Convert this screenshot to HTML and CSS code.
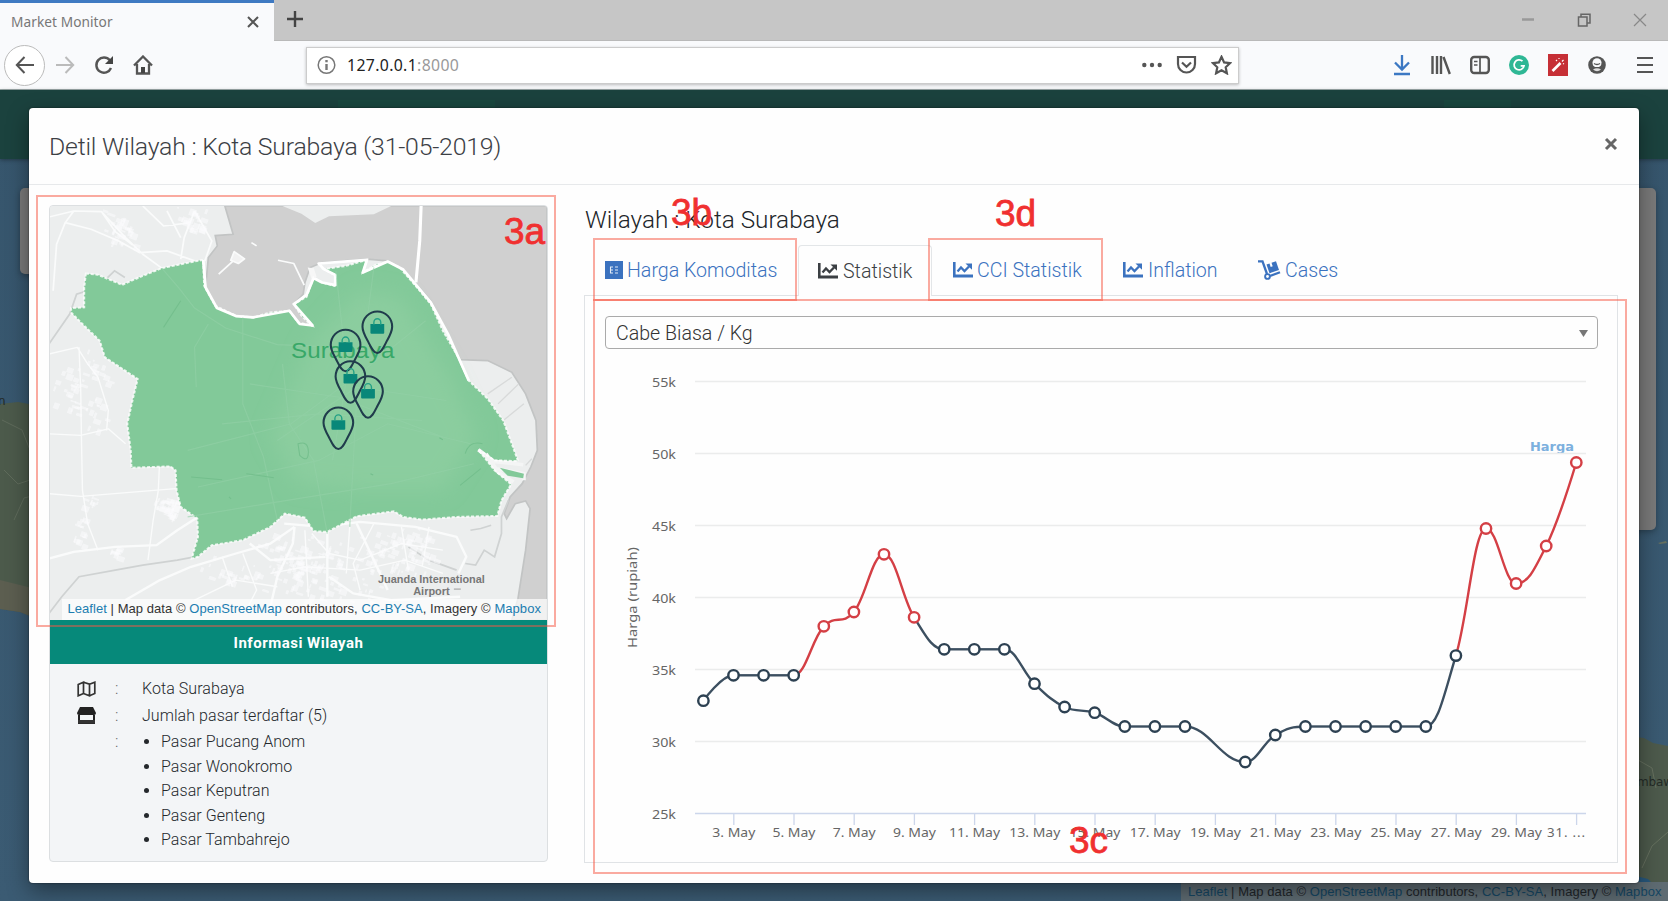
FILE: index.html
```html
<!DOCTYPE html>
<html lang="id">
<head>
<meta charset="utf-8">
<title>Market Monitor</title>
<link rel="stylesheet" href="styles.css">
</head>
<body>
<header class="browser">
  <div class="tabstrip">
    <div class="tab"><span class="tab-title">Market Monitor</span>
      <svg class="tab-close" width="14" height="14" viewBox="0 0 14 14"><path d="M2 2l10 10M12 2L2 12"/></svg>
    </div>
    <svg class="tab-new" width="18" height="18" viewBox="0 0 18 18"><path d="M9 1v16M1 9h16"/></svg>
    <div class="winctl">
      <svg width="14" height="14" viewBox="0 0 14 14"><path d="M1 6.500h12" stroke-width="2.500" stroke="#999"/></svg>
      <svg width="14" height="14" viewBox="0 0 14 14"><path d="M1.500 4h8.500v9H1.500zM4 4V1.200h9V10h-3"/></svg>
      <svg width="14" height="14" viewBox="0 0 14 14"><path d="M1 1l12 12M13 1L1 13" stroke="#888" stroke-width="1.200"/></svg>
    </div>
  </div>
  <div class="toolbar">
    <div class="back"><svg width="20" height="18" viewBox="0 0 20 18"><path d="M19 9H2M9.500 1L1.800 9l7.700 8"/></svg></div>
    <svg class="fwd" width="20" height="18" viewBox="0 0 20 18"><path d="M1 9h17M10.500 1l7.700 8-7.700 8"/></svg>
    <svg class="reload" width="20" height="20" viewBox="0 0 20 20"><path d="M15.800 5.200A7.600 7.600 0 1 0 17 13" stroke-width="2.400"/><path d="M19 1v8h-8z" fill="#444" stroke="none"/></svg>
    <svg class="home" width="20" height="20" viewBox="0 0 20 20"><path d="M1 10.500L10 1.500l9 9M4 9v9.500h12V9" stroke-width="2.300"/><path d="M8 18v-6h4v6z" fill="#444" stroke="none"/></svg>
    <div class="urlbar">
      <svg width="19" height="20" viewBox="0 0 19 20"><circle cx="9.500" cy="10" r="8.300" stroke="#777" stroke-width="1.500"/><path d="M9.500 9v6M9.500 5v2.200" stroke="#777" stroke-width="2.400"/></svg>
      <span class="url">127.0.0.1<i>:8000</i></span>
      <div class="urlicons">
        <svg width="20" height="20" viewBox="0 0 20 20"><g fill="#555" stroke="none"><circle cx="2.300" cy="10" r="2.200"/><circle cx="10" cy="10" r="2.200"/><circle cx="17.700" cy="10" r="2.200"/></g></svg>
        <svg width="21" height="20" viewBox="0 0 21 20"><path d="M2 2h17v7a8.500 8.500 0 0 1-17 0zM6 7.500l4.500 4.300L15 7.500" stroke-width="2.200"/></svg>
        <svg width="21" height="20" viewBox="0 0 21 20"><path d="M10.500 1.800l2.600 5.600 6 .7-4.400 4.200 1.200 6-5.400-3-5.400 3 1.200-6L1.900 8.100l6-.7z" stroke-width="2.200"/></svg>
      </div>
    </div>
    <div class="tools">
      <svg width="20" height="22" viewBox="0 0 20 22"><path d="M10 1v14M3 8.500l7 7 7-7M2 20h16" stroke="#3c78c3" stroke-width="2.300"/></svg>
      <svg width="20" height="22" viewBox="0 0 20 22"><path d="M1.500 2v18M6 2v18M10 2v18M12.500 3l6.300 17" stroke-width="2.400"/></svg>
      <svg width="20" height="22" viewBox="0 0 20 22"><rect x="1.200" y="3" width="17.600" height="16" rx="3" stroke-width="2.400"/><path d="M10 3v16M4 7.500h3.500M4 11h3.500" stroke-width="1.700"/></svg>
      <svg width="20" height="22" viewBox="0 0 20 22"><circle cx="10" cy="11" r="10" fill="#2fb795" stroke="none"/><path d="M13.500 7.200A5 5 0 1 0 15 11.800h-3.300" stroke="#fff" stroke-width="1.800"/></svg>
      <svg width="20" height="22" viewBox="0 0 20 22"><path d="M0 0h20v22H0z" fill="#c62f36" stroke="none"/><path d="M4.500 17l8-8" stroke="#fff" stroke-width="2.600"/><path d="M14 7.500l1.500-1.500M8 6l1 1M11 4v1M16 10l-1-.6" stroke="#fff" stroke-width="1.200"/></svg>
      <svg width="20" height="22" viewBox="0 0 20 22"><circle cx="10" cy="11" r="8.800" fill="#555" stroke="none"/><path d="M5.500 8.500a4.500 4.300 0 0 1 9 0q0 3.500-2.500 4.500h-4q-2.500-1-2.500-4.500z" fill="#f9fafc" stroke="none"/><path d="M6 15.500q4-2.500 8 0-4 3.500-8 0z" fill="#ddd" stroke="none"/><path d="M7 9.500q3 2 6 0" stroke-width="1.500"/></svg>
    </div>
    <svg class="menu" width="16" height="18" viewBox="0 0 16 18"><path d="M0 2h16M0 9h16M0 16h16" stroke-width="2"/></svg>
  </div>
</header>

<main class="page">
  <div class="navband"><span></span><span></span></div>
  <svg class="basemap" width="1668" height="811" viewBox="0 90 1668 811">
    <path d="M0 404L18 402 40 406V620L20 612 0 609z" fill="#4c5a4b"/>
    <path d="M0 580l40 10v30l-20-8-20-3z" fill="#5c5e50"/>
    <path d="M4 470l14 14 12-4M2 420l20 10 8 20M14 520l10-22 8-2" stroke="#5f6b5b" fill="none"/>
    <path d="M1636 737l8 1 9 5 15 3v146h-22l-10-10z" fill="#4d5a4c"/>
    <path d="M1638 760l14 8 4 20M1642 868l10-22 16-14" stroke="#66705f" fill="none"/>
    <path d="M1636 876l12 3 8 8h-20z" fill="#27567a"/>
    <path d="M1658 543l8-2 1 2-7 1z" fill="#66705f"/>
    <text x="-2" y="405" class="place">n</text><text x="1637" y="786" class="place" textLength="36">mbaw</text>
  </svg>
  <div class="ghost ghost-left"></div>
  <div class="ghost ghost-right"></div>
  <div class="attrib page-attrib"><a>Leaflet</a> | Map data © <a>OpenStreetMap</a> contributors, <a>CC-BY-SA</a>, Imagery © <a>Mapbox</a></div>

  <section class="modal">
    <div class="modal-head">
      <h1>Detil Wilayah : Kota Surabaya (31-05-2019)</h1>
      <svg width="14" height="14" viewBox="0 0 14 14"><path d="M2 2l10 10M12 2L2 12"/></svg>
    </div>
    <div class="modal-body">
      <div class="region">
        <div class="map">
          <svg width="498" height="414" viewBox="58 45 1444 1245" preserveAspectRatio="none">
            <defs>
              <filter id="soft"><feGaussianBlur stdDeviation="30"/></filter>
              <g id="pin">
                <path d="M0 79C-12 79-20 58-28 42-38 24-43 12-43 0a43 46 0 0 1 86 0C43 12 38 24 28 42 20 58 12 79 0 79z" fill="none" stroke="#203c4c" stroke-width="6"/>
                <path d="M-20-8H20V18q0 3-3 3h-34q-3 0-3-3z" fill="#088779"/>
                <path d="M-10-6v-7a10 11 0 0 1 20 0v7" fill="none" stroke="#22a085" stroke-width="4"/>
              </g>
            </defs>
            <path d="M58 45H1502V1290H58z" fill="#eceeee"/>
            <path d="M568 45L592 130 540 134 546 165 520 200 512 290 545 355 600 378 660 380 755 362 785 400 825 404 768 340 795 310 800 275 815 230 850 215 980 205 1040 210 1085 235 1165 330 1215 430 1250 507 1330 510 1400 545 1440 610 1470 690 1474 780 1455 830 1430 880 1395 920 1378 970 1385 985 1410 940 1440 932 1453 955 1440 1080 1418 1225 1400 1290H1502V45z" fill="#d0d0d0" stroke="#c2c4c4" stroke-width="5"/>
            <path d="M735 45L790 68 830 96 870 76 1000 70 1050 45z" fill="#eceeee"/>
            <g fill="none" stroke="#fafbfb" stroke-width="5" stroke-linejoin="round">
              <path d="M1137 45L1133 150 1122 275" stroke="#fff" stroke-width="9"/>
              <path d="M550 250l55-52M722 208l46 10 30 65M645 155l15 10"/>
              <path d="M595 182l30 22-18 14-22-10z" fill="#f2f2f2"/>
              <path d="M58 78L130 60 210 62 280 140 330 190 385 232M130 60L105 95 80 160 70 300M105 95L180 115 260 150 320 185 400 180 480 210M440 205L450 140 480 60M210 62l40 60 50 40M480 60l50 90-20 60M330 45l60 60 80-10M400 60l40 80"/>
              <path d="M58 490L140 470 170 520 200 560 230 660 225 720M58 730L150 735 230 715 280 760M145 470L150 600 152 740 155 900 170 1000 200 1080M58 910L150 918 425 895M378 830L375 900 360 990 345 1110" stroke-width="4"/>
              <path d="M58 1105L130 1085 250 1070 370 1065 430 1020 490 980M280 1230L380 1170 470 1130 600 1090 700 1060 770 1010M865 1025V1220M770 1010L765 1060 720 1160 700 1250M740 1000L850 1010 960 995 1120 1010 1240 1040 1268 1100 1245 1150M870 1160L940 1210 1050 1230 1250 1220M640 1060L700 1110 860 1100M950 1000L1000 1110 1040 1200" stroke-width="7"/>
              <path d="M820 1030l50 60 90 20 120-50 120 20M700 1150l100-20 160 10 130-30 110 40M930 1010l-10 140M1080 1010l20 130M620 1090l40 110-30 60M560 1100l30 90M800 1020l10 200M480 1230l120-60 120 20M1000 1000l-60 120 20 80M1160 1010l-20 120" stroke-width="4"/>
            </g>
            <path d="M58 1270L95 1220 145 1160 250 1140 330 1125 430 1110 480 1100M1265 1120l30 5 25-45 30 20 20-70 0-50 20-50M1280 1020l30-5 30-10M58 460l60-90 20-60 60-20 50-50 30 20M1100 1070l60 40 80 30" fill="none" stroke="#cfd2d2" stroke-width="5"/>
            <path d="M1440 825l18-20M1330 610l70-50M1360 640l60-60M1375 690l60-50" fill="none" stroke="#d8dada" stroke-width="4"/>
            <g id="blocks" fill="#fbfcfd"></g>
            <path id="city" d="M165 248L200 252 270 282 330 255 385 232 450 218 505 207 508 285 540 345 600 375 650 380 700 365 755 360 780 395 820 405 790 375 768 340 805 318 825 260 850 275 885 285 890 255 855 235 920 225 980 207 968 245 1005 222 1040 212 1075 230 1125 290 1165 340 1200 420 1245 500 1275 570 1330 625 1375 690 1400 760 1418 812 1350 810 1303 778 1350 840 1398 882 1370 930 1358 977 1240 980 1140 988 1085 980 1058 963 950 978 865 1025 825 1023 800 982 742 970 700 1010 620 1050 530 1065 490 1100 472 1105 490 1040 488 985 440 950 428 900 425 840 410 828 297 832 295 780 285 700 300 630 315 565 220 500 205 450 160 405 122 365 122 352 160 350 160 290z" fill="#82c999"/>
            <path d="M820 450L960 300 1080 320 1220 560 1300 740 1200 900 950 900 780 880 700 740z" fill="#8bcd9f" filter="url(#soft)"/>
            <path d="M505 207L512 290 545 352 600 376 650 380 755 360 785 400 822 404 768 340 805 312 825 262 850 275 888 283 888 252 855 235 840 218 980 207 968 245 1040 212 1085 236 1165 335 1215 430 1275 570" fill="none" stroke="#fff" stroke-width="8" stroke-linejoin="round"/>
            <path d="M808 230l18 2 8 26-14 8z" fill="#f7f7f7"/>
            <path d="M1303 778l45 35 85 10M1325 790l35 55 45 30M1355 835l80 15v20" fill="none" stroke="#f4f5f5" stroke-width="11"/>
            <path d="M1365 832l70 18-2 14-45-8z" fill="#82c999"/>
            <use href="#city" class="outline"/>
            <path d="M385 232l50 60 45 60 90 60 150 50 120 5M520 400l-40 70 5 120M620 380v260l60 160 40 190M735 520l20 180 70 110 40 220M890 240l20 190 40 200-20 380M1000 230l-20 160-60 180-40 240M1150 390l-180 150-210 160-300 80M1210 630l-260-40-230 160M1280 760l-240-60-200 110-350 80M460 980l230-40 360-60 240-60M640 580l260 40 300 120M560 700l280-30 300 20" fill="none" stroke="#93d1a6" stroke-width="3.500" opacity=".6"/>
            <path d="M780 760q30-10 30 25t-25 10zM1265 790q10-40 50-30M470 860l90 8M630 850l80 12M1250 885l60-50M440 330l-50 80M580 920l6 6M990 850l8 4M1190 742l10 6" fill="none" stroke="#74bf8d" stroke-width="3"/>
            <g fill="#38a868" font-family="Liberation Sans, Arial, sans-serif" font-size="66"><text x="760" y="502" textLength="300" lengthAdjust="spacingAndGlyphs">Surabaya</text></g>
            <g fill="#777" font-family="Liberation Sans, Arial, sans-serif" font-weight="700" font-size="32"><text x="1012" y="1178" textLength="310" lengthAdjust="spacingAndGlyphs">Juanda International</text><text x="1114" y="1215" textLength="106" lengthAdjust="spacingAndGlyphs">Airport</text></g>
            <path d="M1232 1197h20" stroke="#999" stroke-width="3"/>
            <use href="#pin" x="1010" y="408"/><use href="#pin" x="918" y="463"/><use href="#pin" x="932" y="558"/><use href="#pin" x="983" y="603"/><use href="#pin" x="897" y="697"/>
          </svg>
          <div class="attrib map-attrib"><a>Leaflet</a> | Map data © <a>OpenStreetMap</a> contributors, <a>CC-BY-SA</a>, Imagery © <a>Mapbox</a></div>
        </div>
        <h2 class="info-title">Informasi Wilayah</h2>
        <div class="info">
          <div class="row"><svg width="19" height="16" viewBox="0 0 19 16"><path d="M1.200 3.500L6.500 1.200v11.300L1.200 14.800zM6.500 1.200l6 2v11.600l-6-2.300M12.500 3.200l5.300-2v11.300l-5.300 2.300" fill="none" stroke="#333" stroke-width="1.700"/></svg><b>:</b><span>Kota Surabaya</span></div>
          <div class="row"><svg width="19" height="17" viewBox="0 0 19 17"><path d="M3 0h13l3 6q0 2-2 2H2Q0 8 0 6z" fill="#222"/><path d="M2 8v8h15V8" fill="none" stroke="#222" stroke-width="2"/><path d="M1 13h17v3.500H1z" fill="#333"/></svg><b>:</b><span>Jumlah pasar terdaftar (5)</span></div>
          <div class="row list"><i></i><b>:</b><ul><li>Pasar Pucang Anom</li><li>Pasar Wonokromo</li><li>Pasar Keputran</li><li>Pasar Genteng</li><li>Pasar Tambahrejo</li></ul></div>
        </div>
      </div>
      <div class="detail">
        <h2>Wilayah : Kota Surabaya</h2>
        <nav class="tabs">
          <a class="t1"><svg width="18" height="18" viewBox="0 0 18 18"><path d="M0 0h18v18H0z"/><path d="M5.500 6H8M5.500 9H8M5.500 12H8M5.500 5.500v7M10 6h3M10 9h3M10 12h3" stroke="#fff" stroke-width="1.100" opacity=".85"/></svg><span>Harga Komoditas</span></a>
          <a class="t2"><svg width="20" height="16" viewBox="0 0 20 16"><use href="#trend"/></svg><span>Statistik</span></a>
          <a class="t3"><svg width="20" height="16" viewBox="0 0 20 16"><g id="trend"><path d="M0 0h2.600v12.600H20V15.500H0z"/><path d="M4.500 9.500l3.500-4 3.500 3.500 4.500-4.500" fill="none" stroke="currentColor" stroke-width="2.300"/><path d="M12.500 1.500H19v6.300z"/></g></svg><span>CCI Statistik</span></a>
          <a class="t4"><svg width="20" height="16" viewBox="0 0 20 16"><use href="#trend"/></svg><span>Inflation</span></a>
          <a class="t5"><svg width="23" height="20" viewBox="0 0 23 20"><path d="M0 1.300h4.500L9 14" fill="none" stroke="currentColor" stroke-width="2.300"/><circle cx="9.500" cy="16.500" r="2.400" fill="none" stroke="currentColor" stroke-width="1.900"/><path d="M12 16l10-3.800" stroke="currentColor" stroke-width="2.300"/><path d="M8.500 4.500l3-1 1.200 3.500 2-.7L13.500 2.800l4.500-1.600 3 8.700-9.500 3.400z"/></svg><span>Cases</span></a>
        </nav>
        <div class="panel">
          <div class="select"><span>Cabe Biasa / Kg</span><svg width="9" height="7" viewBox="0 0 9 7"><path d="M0 0h9L4.500 7z" fill="#777"/></svg></div>
          <svg id="chart" class="chart" width="993" height="500" viewBox="605 355 993 500">
            <text class="series" x="1530" y="451" textLength="44" lengthAdjust="spacingAndGlyphs">Harga</text>
            <text class="axis" transform="translate(636.500 648) rotate(-90)" textLength="101" lengthAdjust="spacingAndGlyphs">Harga (rupiah)</text>
          </svg>
        </div>
      </div>
    </div>
  </section>
</main>
<div class="mark m3a"><span>3a</span></div>
<div class="mark m3b"><span>3b</span></div>
<div class="mark m3c"><span>3c</span></div>
<div class="mark m3d"><span>3d</span></div>
<script src="chart.js"></script>
</body>
</html>
```
FILE: styles.css
```css
*{box-sizing:border-box}
body{margin:0;width:1668px;height:901px;overflow:hidden;font-family:Roboto,sans-serif;color:#212529;display:flex;flex-direction:column;position:relative;background:#38586f}
h1,h2{margin:0;font-weight:300}
svg{display:block;flex:none}
.browser{height:90px;flex:none;background:#f9fafc;border-bottom:1px solid #9dabab;font-family:"Noto Sans","Open Sans",sans-serif}
.browser svg{fill:none;stroke:#555;stroke-width:2}
.tabstrip{height:41px;background:#c6c6c6;display:flex;align-items:center;border-bottom:1px solid #b9b9b9}
.tab{width:274px;height:41px;background:#f9fafc;border-top:3px solid #3f7ac2;display:flex;align-items:center;justify-content:space-between;padding:0 14px 1px 11px;align-self:flex-start}
.tab-title{font-size:13.700px;color:#777;letter-spacing:.06px}
.tab-new{margin-left:12px;margin-bottom:2px}
.browser .tab-new{stroke:#444;stroke-width:2.400}
.winctl{margin-left:auto;display:flex;gap:42px;padding-right:21px}
.browser .winctl svg{stroke:#666;stroke-width:1.500}
.toolbar{height:48px;display:flex;align-items:center;padding-left:4px}
.back{width:41px;height:41px;border:1px solid #bbb;border-radius:50%;background:#fff;display:flex;align-items:center;justify-content:center}
.browser .fwd{margin-left:10px;stroke:#bbb}
.reload{margin-left:19px}
.home{margin-left:19px}
.urlbar{margin-left:153px;width:933px;height:37px;background:#fff;border:1px solid #ccc;box-shadow:0 1px 3px rgba(0,0,0,.25);display:flex;align-items:center;padding:0 6px 0 10px}
.url{margin-left:11px;font-size:15.800px;color:#222;letter-spacing:.35px}
.url i{font-style:normal;color:#999}
.urlicons{margin-left:auto;display:flex;gap:14px}
.tools{margin-left:153px;display:flex;gap:19px}
.menu{margin-left:30px}
.page{position:relative;height:811px;background:linear-gradient(#36556c,#3b5b73)}
.navband{height:69px;background:#1b423e;display:flex;align-items:flex-start;position:relative;z-index:1;box-shadow:0 1px 4px rgba(0,0,0,.35)}
.navband span{height:18px;margin-top:10px;background:#19483f;width:157px;margin-left:338px}
.navband span+span{width:67px;margin-left:949px}
.basemap{position:absolute;left:0;top:0}
.place{font:12px "DejaVu Sans",sans-serif;fill:#232a26}
.ghost{position:absolute;background:#7a7a7a;border-radius:5px;top:98px;box-shadow:0 2px 6px rgba(0,0,0,.3)}
.ghost-left{left:20px;width:60px;height:86px}
.ghost-right{right:12px;width:60px;height:342px}
.attrib{font-family:"Liberation Sans",Arial,sans-serif;font-size:13px;color:#333;white-space:nowrap;line-height:20px;letter-spacing:.055px}
.attrib a{color:#1c7db0}
.page-attrib{position:absolute;right:0;bottom:-1px;width:487px;padding-left:7px;background:#5e6b72;color:#1e2529}
.page-attrib a{color:#154663}
.modal{position:absolute;left:29px;top:18px;width:1610px;height:775px;background:#fefefe;border-radius:4px;box-shadow:0 8px 22px rgba(0,0,0,.4),0 0 2px rgba(0,0,0,.6);z-index:2;display:flex;flex-direction:column}
.modal-head{height:77px;border-bottom:1px solid #e7e9eb;display:flex;align-items:center;justify-content:space-between;padding:0 21px 0 20px}
.modal-head h1{font-size:24.800px;color:#3c4045;line-height:30px;letter-spacing:-.2px;padding-top:1px}
.modal-head svg{fill:none;stroke:#666;stroke-width:3;margin-bottom:5px}
.modal-body{display:flex;padding:20px 21px 0 20px}
.region{width:499px;height:657px;border:1px solid #dcdfe1;border-radius:4px;overflow:hidden;background:#f3f5f7}
.map{position:relative;height:414px}
.map svg{margin-left:-1px}
.outline{fill:none;stroke:#fff;stroke-width:6;stroke-dasharray:9 5;opacity:.8}
.map use.outline{fill-opacity:0}
.map-attrib{position:absolute;right:0;bottom:0;background:rgba(255,255,255,.7);padding:0 6px 0 5px;height:21px}
.info-title{height:44px;background:#06897a;color:#fff;font-size:15px;letter-spacing:.5px;font-weight:700;text-align:center;line-height:46px}
.info{padding:11px 0 0 27px;font-size:16px;font-weight:300;color:#24282c;letter-spacing:.06px}
.row{display:flex;height:27px;align-items:center}
.row b{font-weight:300;margin-left:19px;width:27px;color:#666}
.row svg,.row i{width:19px}
.list{height:auto;align-items:flex-start;line-height:24.500px;padding-top:1px}
.list ul{margin:0;padding:0 0 0 19px}
.detail{margin-left:36px;width:1034px}
.detail h2{font-size:24.300px;line-height:30px;height:40px;padding-left:1px;font-weight:300;color:#212529}
.tabs{display:flex;height:50px;font-size:19.600px;font-weight:300;color:#3b72bf}
.tabs a{display:flex;align-items:center;gap:5px;border:1px solid transparent;white-space:nowrap}
.tabs svg{fill:currentColor}
.tabs .t1{padding:0 19px 0 20px;gap:4px;width:214px}
.tabs .t2{background:#fefefe;border-color:#e3e6e8;border-bottom:0;border-radius:4px 4px 0 0;color:#3b3f43;width:134px;padding-left:19px;height:51px;position:relative;z-index:1}
.tabs .t3{padding-left:20px;gap:4px;width:171px}
.tabs .t4{padding-left:19px;width:134px}
.tabs .t5{padding-left:20px;gap:4px}
.panel{height:568px;border:1px solid #e0e3e6;padding:20px 19px 0 20px}
.select{height:33px;border:1.500px solid #aaa;border-radius:4px;display:flex;align-items:center;justify-content:space-between;padding:2px 9px 0 10px;font-size:19.600px;font-weight:300;color:#333}
.chart{margin-top:6px}
.chart text{font-family:"Noto Sans","Open Sans",sans-serif;font-size:13.300px;fill:#666}
.chart .series{font-family:"DejaVu Sans",sans-serif;font-weight:700;font-size:13px;fill:#7cb0de}
.mark{position:absolute;border:2px solid rgba(245,85,65,.5);z-index:5;pointer-events:none}
.mark span{position:absolute;font:37px/40px "Liberation Sans",Arial,sans-serif;color:#f03030;-webkit-text-stroke:.8px #f03030}
.m3a{left:36px;top:195px;width:520px;height:432px}
.m3a span{left:466px;top:15px}
.m3b{left:593px;top:238px;width:204px;height:63px}
.m3b span{left:76px;top:-47px}
.m3c{left:593px;top:299px;width:1034px;height:575px}
.m3c span{left:474px;top:520px}
.m3d{left:928px;top:238px;width:175px;height:63px}
.m3d span{left:65px;top:-46px}
```
FILE: chart.js
```js
(function () {
  var NS = 'http://www.w3.org/2000/svg';
  var chart = document.getElementById('chart');
  function add(parent, name, attrs, text) {
    var el = document.createElementNS(NS, name);
    for (var k in attrs) el.setAttribute(k, attrs[k]);
    if (text) el.textContent = text;
    parent.appendChild(el);
    return el;
  }
  function dayX(d) { return 703.4 + 30.1 * (d - 2); }

  // gridlines and value labels
  for (var i = 0; i <= 6; i++) {
    var gy = 813.5 - i * 72;
    add(chart, 'path', { d: 'M695 ' + gy + 'H1586', stroke: i ? '#ebecec' : '#ccd6eb', 'stroke-width': 1.6 });
    add(chart, 'text', { x: 652, y: gy + 5, textLength: 24, lengthAdjust: 'spacingAndGlyphs' }, (25 + 5 * i) + 'k');
  }
  for (var d = 3; d <= 31; d += 2) {
    var x = dayX(d) + 0.3;
    add(chart, 'path', { d: 'M' + x + ' 814v11', stroke: '#ccd6eb', 'stroke-width': 1.3 });
    var w = d < 10 ? 43 : 51;
    if (d === 31) add(chart, 'text', { x: 1547, y: 837, textLength: 38 }, '31. ...');
    else add(chart, 'text', { x: x - w / 2, y: 837, textLength: w, lengthAdjust: 'spacingAndGlyphs' }, d + '. May');
  }

  var raw = [[2, 700.7], [3, 675.3], [4, 675.3], [5, 675.3], [6, 626.3], [7, 612], [8, 554.3], [9, 617.3],
    [10, 649.3], [11, 649.3], [12, 649.3], [13, 683.7], [14, 707], [15, 712.7], [16, 726.5], [17, 726.5],
    [18, 726.5], [20, 762], [21, 735], [22, 726.5], [23, 726.5], [24, 726.5], [25, 726.5], [26, 726.5],
    [27, 655.6], [28, 528.5], [29, 583.5], [30, 546], [31, 462.5]];
  var pts = raw.map(function (p) { return { d: p[0], x: dayX(p[0]), y: p[1] }; });

  // spline control points on both sides of every inner point
  pts.forEach(function (p, n) {
    var a = pts[n - 1], b = pts[n + 1];
    p.lx = p.rx = p.x; p.ly = p.ry = p.y;
    if (!a || !b) return;
    var lx = (1.5 * p.x + a.x) / 2.5, ly = (1.5 * p.y + a.y) / 2.5;
    var rx = (1.5 * p.x + b.x) / 2.5, ry = (1.5 * p.y + b.y) / 2.5;
    var c = (ry - ly) * (rx - p.x) / (rx - lx) + p.y - ry;
    ly += c; ry += c;
    if (ly > a.y && ly > p.y) { ly = Math.max(a.y, p.y); ry = 2 * p.y - ly; }
    else if (ly < a.y && ly < p.y) { ly = Math.min(a.y, p.y); ry = 2 * p.y - ly; }
    if (ry > b.y && ry > p.y) { ry = Math.max(b.y, p.y); ly = 2 * p.y - ry; }
    else if (ry < b.y && ry < p.y) { ry = Math.min(b.y, p.y); ly = 2 * p.y - ry; }
    p.lx = lx; p.ly = ly; p.rx = rx; p.ry = ry;
  });
  for (var n = 1; n < pts.length; n++) {
    var a = pts[n - 1], b = pts[n];
    var red = (b.d >= 6 && b.d <= 9) || b.d >= 28;
    add(chart, 'path', {
      d: 'M' + a.x + ' ' + a.y + 'C' + [a.rx, a.ry, b.lx, b.ly, b.x, b.y].join(' '),
      fill: 'none', stroke: red ? '#d43f45' : '#3c4f60', 'stroke-width': 2.4
    });
  }
  pts.forEach(function (p) {
    var red = (p.d >= 6 && p.d <= 9) || p.d >= 28;
    add(chart, 'circle', { cx: p.x, cy: p.y, r: 5.2, fill: '#fff', stroke: red ? '#d43f45' : '#2d4152', 'stroke-width': 2.4 });
  });

  // built-up areas scattered over the land
  var blocks = document.getElementById('blocks'), seed = 7;
  function rnd() { seed = (seed * 16807) % 2147483647; return seed / 2147483647; }
  [[260, 110, 60, 60, 30], [480, 80, 60, 40, 22], [190, 530, 60, 60, 20], [110, 600, 45, 90, 24], [400, 950, 45, 35, 36],
    [150, 1020, 20, 60, 14], [180, 930, 25, 20, 8], [780, 1110, 150, 90, 90], [1050, 1080, 140, 80, 70], [900, 1200, 200, 50, 30],
    [180, 660, 60, 60, 14], [600, 1150, 110, 60, 20], [250, 1080, 20, 30, 8]].forEach(function (c) {
    for (var k = 0; k < c[4]; k++) {
      var bx = c[0] + (rnd() + rnd() - 1) * c[2], by = c[1] + (rnd() + rnd() - 1) * c[3];
      add(blocks, 'rect', { x: bx, y: by, width: 4 + rnd() * 20, height: 4 + rnd() * 17, opacity: 0.55, transform: 'rotate(20 ' + bx + ' ' + by + ')' });
    }
  });
})();
```
